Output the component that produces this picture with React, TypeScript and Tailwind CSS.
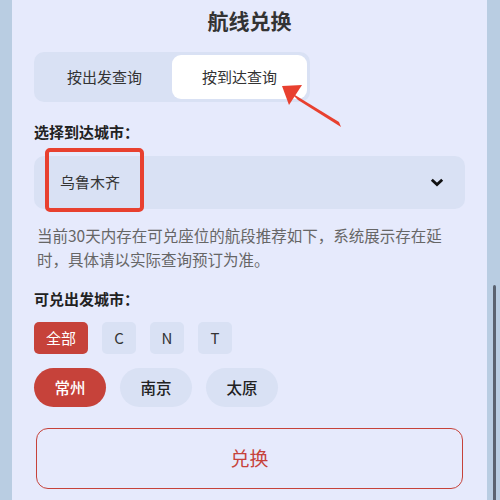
import React from 'react';

const font = { fontFamily: '"Noto Sans CJK SC", "Noto Sans", sans-serif' };

const letters = ['C', 'N', 'T'];
const cities = ['常州', '南京', '太原'];

const App: React.FC = () => {
    return (
        <div className='relative w-[500px] h-[500px] overflow-hidden bg-[#b9cde2]' style={font}>
            <div className='ml-[12px] w-[475px] h-full bg-[#e6eafc] px-[22px] flex flex-col'>
                <h1 className='pt-[6px] text-[21px] leading-[28px] font-bold text-center text-[#333]'>航线兑换</h1>

                {/* tabs */}
                <div className='mt-[18px] w-[276px] h-[50px] rounded-[10px] bg-[#d9e1f4] p-[3px] flex'>
                    <div className='flex-1 flex items-center justify-center text-[15px] text-[#333]'>按出发查询</div>
                    <div className='flex-1 flex items-center justify-center rounded-[9px] bg-white text-[15px] text-[#333]'>按到达查询</div>
                </div>

                <div className='mt-[19px] text-[15px] leading-[22px] font-bold text-[#222]'>选择到达城市：</div>

                <div className='mt-[13px] h-[53px] rounded-[10px] bg-[#d9e1f4] pl-[26px] pr-[21px] flex items-center justify-between'>
                    <span className='text-[15px] text-[#333]'>乌鲁木齐</span>
                    <svg width='14' height='9' viewBox='0 0 14 9'>
                        <path d='M1.8 1.8 L7 6.6 L12.2 1.8' fill='none' stroke='#111' strokeWidth='2.8' />
                    </svg>
                </div>

                <p className='mt-[14px] pl-[3px] pr-[8px] text-[15.5px] leading-[24px] text-[#666]'>
                    当前30天内存在可兑座位的航段推荐如下，系统展示存在延时，具体请以实际查询预订为准。
                </p>

                <div className='mt-[17px] text-[15px] leading-[22px] font-bold text-[#222]'>可兑出发城市：</div>

                <div className='mt-[12px] flex gap-[14px]'>
                    <div className='h-[32px] w-[54px] rounded-[5px] bg-[#c6423a] text-white text-[15px] flex items-center justify-center'>全部</div>
                    {letters.map((l) => (
                        <div key={l} className='h-[32px] w-[34px] rounded-[5px] bg-[#d9e1f4] text-[#333] text-[15px] flex items-center justify-center'>{l}</div>
                    ))}
                </div>

                <div className='mt-[14px] flex gap-[14px]'>
                    {cities.map((c, i) => (
                        <div
                            key={c}
                            className={
                                i === 0
                                    ? 'h-[39px] w-[72px] rounded-full bg-[#c6423a] text-white text-[15.5px] font-medium flex items-center justify-center'
                                    : 'h-[39px] w-[72px] rounded-full bg-[#d9e1f4] text-[#222] text-[15.5px] font-medium flex items-center justify-center'
                            }
                        >
                            {c}
                        </div>
                    ))}
                </div>

                <button className='mt-[21px] mx-[2px] h-[61px] rounded-[12px] border border-[#c6423a] text-[#c6423a] text-[19px]'>兑换</button>
            </div>

            {/* scrollbar */}
            <div className='absolute left-[493px] top-[285px] w-[3px] h-[230px] rounded-full bg-[#5a6270]' />

            {/* annotations */}
            <div className='absolute left-[45px] top-[148px] w-[99px] h-[64px] rounded-[5px] border-[4px] border-[#e8402f]' />
            <svg className='absolute left-0 top-0' width='500' height='500' viewBox='0 0 500 500'>
                <polygon points='282,86 302,85 289,105' fill='#e8402f' />
                <polygon points='290,92 298,100 341,127 339,122' fill='#e8402f' />
            </svg>
        </div>
    );
};

export default App;
